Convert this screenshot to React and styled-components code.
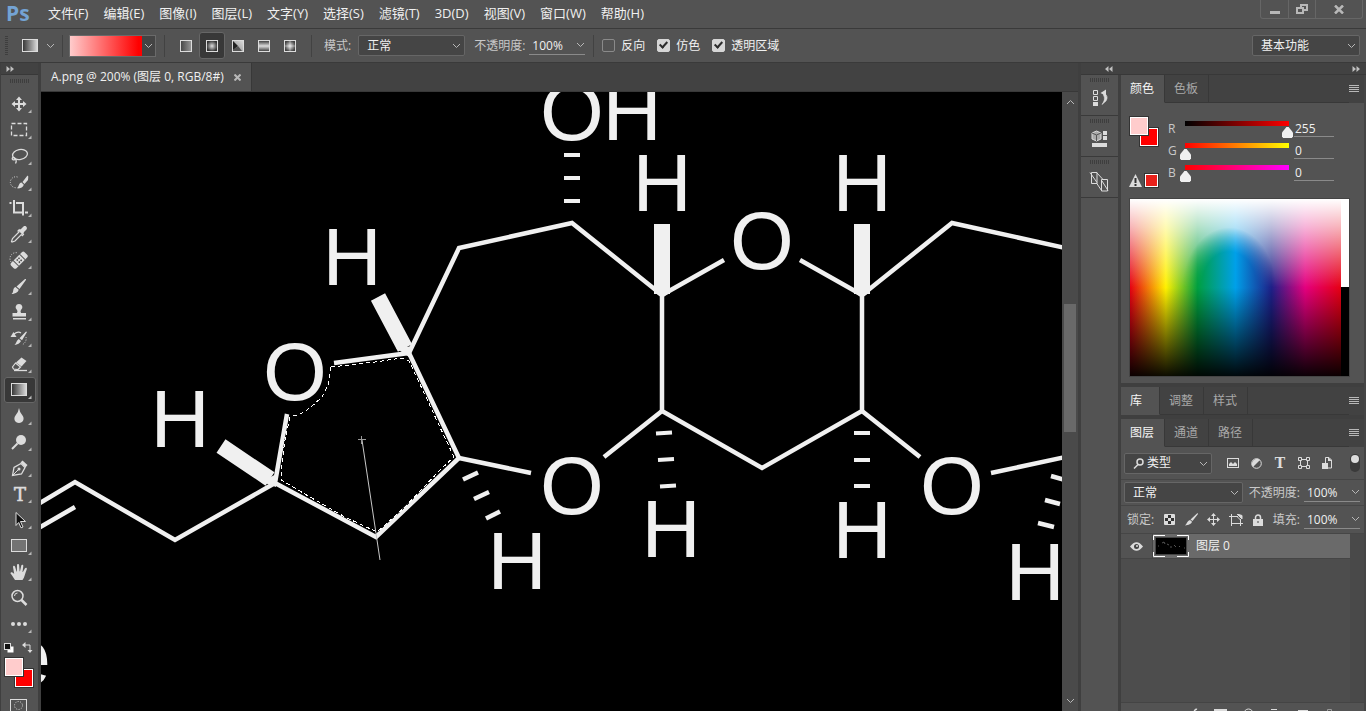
import React from 'react';
import styled, { createGlobalStyle, css } from 'styled-components';

const GlobalStyle = createGlobalStyle`
  *, *::before, *::after { box-sizing: border-box; }
  html, body { margin: 0; background: #535353; overflow: hidden; }
  body, button, input, select {
    font-family: "Open Sans", "Noto Sans CJK SC", sans-serif;
    font-size: 12px;
    line-height: 16px;
    color: #f0f0f0;
  }
  button { margin: 0; padding: 0; border: 0; background: none; }
  svg { display: block; flex: none; }
`;

const Shell = styled.div`
  display: flex;
  flex-direction: column;
  height: 100vh;
  overflow: hidden;
  background: #535353;
`;

/* ---------- menu bar ---------- */

const MenuBar = styled.header`
  display: flex;
  flex: none;
  height: 29px;
  border-bottom: 1px solid #3a3a3a;
`;

const Logo = styled.div`
  width: 48px;
  padding-left: 6px;
  color: #74a3d4;
  font: bold 21px/26px "Open Sans", sans-serif;
`;

const MenuList = styled.nav`
  display: flex;
  flex: 1;
  gap: 15px;
  align-items: center;
  padding-bottom: 2px;
`;

const MenuItem = styled.button`
  font-size: 13px;
  white-space: nowrap;
`;

const WindowButtons = styled.div`
  display: flex;
  height: 19px;
  margin-right: 3px;
  border: 1px solid #666;
  border-top: 0;
  border-radius: 0 0 3px 3px;
`;

const WindowButton = styled.button`
  display: flex;
  align-items: center;
  justify-content: center;
  width: ${(p) => p.$width}px;
  & + & { border-left: 1px solid #666; }
`;

/* ---------- options bar ---------- */

const OptionsBar = styled.div`
  display: flex;
  flex: none;
  align-items: center;
  height: 34px;
  padding: 0 6px 0 5px;
  border-bottom: 1px solid #3a3a3a;
`;

const Grip = styled.div`
  flex: none;
  ${(p) =>
    p.$vertical
      ? css`
          width: 3px;
          height: 20px;
          background: repeating-linear-gradient(180deg, #3e3e3e 0 1px, #535353 1px 2px);
        `
      : css`
          width: 20px;
          height: 4px;
          background: repeating-linear-gradient(90deg, #3e3e3e 0 1px, #535353 1px 2px);
        `}
`;

const Divider = styled.div`
  flex: none;
  width: 1px;
  height: 22px;
  margin: 0 ${(p) => p.$right}px 0 ${(p) => p.$left}px;
  background: #424242;
`;

const PresetButton = styled.button`
  display: flex;
  align-items: center;
  gap: 8px;
  margin-left: 14px;
`;

const GradientPicker = styled.button`
  display: flex;
  width: 87px;
  height: 22px;
  border: 1px solid #6a6a6a;
`;

const GradientPreview = styled.span`
  flex: 1;
  height: 100%;
  background: linear-gradient(90deg, #ffcccc, #ff0000 95%);
`;

const PickerArrow = styled.span`
  display: flex;
  align-items: center;
  justify-content: center;
  width: 13px;
  height: 100%;
  background: #444;
`;

const KindButton = styled.button`
  display: flex;
  align-items: center;
  justify-content: center;
  width: 26px;
  height: 27px;
  border: 1px solid ${(p) => (p.$active ? '#666' : 'transparent')};
  border-radius: 3px;
  background: ${(p) => (p.$active ? '#383838' : 'transparent')};
`;

const Label = styled.label`
  flex: none;
  color: ${(p) => (p.$strong ? '#f0f0f0' : '#c8c8c8')};
  white-space: nowrap;
`;

const SelectBox = styled.div`
  position: relative;
  flex: none;
  width: ${(p) => p.$width}px;
  height: 21px;
  margin: 0 ${(p) => p.$right || 0}px 0 ${(p) => p.$left || 0}px;
  border: 1px solid #666;
  border-radius: 2px;
  background: #454545;
  svg { position: absolute; top: 7px; right: 3px; pointer-events: none; }
  svg.lead { top: 4px; left: 8px; right: auto; }
`;

const Select = styled.select`
  width: 100%;
  height: 19px;
  padding: 0 16px 0 ${(p) => p.$pad || 8}px;
  border: 0;
  outline: 0;
  background: transparent;
  appearance: none;
  line-height: 18px;
`;

const ValueBox = styled.div`
  display: flex;
  flex: none;
  align-items: center;
  width: 56px;
  height: 19px;
  margin-left: 4px;
  border-bottom: 1px solid #8a8a8a;
`;

const ValueInput = styled.input`
  flex: 1;
  min-width: 0;
  height: 18px;
  padding: 0 0 0 3px;
  border: 0;
  outline: 0;
  background: transparent;
`;

const Check = styled.input`
  position: relative;
  flex: none;
  width: 13px;
  height: 13px;
  margin: 0 6px 0 ${(p) => p.$left}px;
  appearance: none;
  border: 1px solid #8a8a8a;
  border-radius: 2px;
  &:checked { background: #d6d6d6; border-color: #d6d6d6; }
  &:checked::after {
    content: '';
    position: absolute;
    left: 3px;
    top: 0;
    width: 5px;
    height: 8px;
    border: solid #2c2c2c;
    border-width: 0 2px 2px 0;
    transform: rotate(42deg);
  }
`;

const Spacer = styled.div`flex: 1;`;

/* ---------- workspace ---------- */

const Workspace = styled.div`
  display: flex;
  flex: 1;
  min-height: 0;
`;

const ToolColumn = styled.aside`
  display: flex;
  flex: none;
  flex-direction: column;
  width: 41px;
  border-right: 3px solid #3f3f3f;
  border-left: 1px solid #3f3f3f;
  overflow: hidden;
`;

const StripHeader = styled.div`
  display: flex;
  flex: none;
  align-items: center;
  height: 12px;
  padding: 0 6px 0 ${(p) => p.$left}px;
  border-bottom: 1px solid #383838;
  background: #424242;
`;

const GripRow = styled.div`
  display: flex;
  flex: none;
  justify-content: center;
  height: 16px;
  padding-top: 4px;
`;

const ToolButton = styled.button`
  flex: none;
  width: 32px;
  height: 26px;
  margin-left: 3px;
  border-radius: 3px;
  ${(p) => p.$active && css`background: #383838; box-shadow: inset 0 0 0 1px #666;`}
`;

const ColorControls = styled.div`
  flex: none;
  padding: 3px 0 0 3px;
`;

const SwatchPair = styled.div`
  display: grid;
  grid-template: 11px 9px 10px / 10px 10px 10px;
  width: 30px;
`;

const Swatch = styled.button`
  width: 20px;
  height: 20px;
  border: 1px solid #333;
  box-shadow: inset 0 0 0 1px #fff;
  background: ${(p) => p.$color};
  grid-area: ${(p) => (p.$front ? '1 / 1 / 3 / 3' : '2 / 2 / 4 / 4')};
  z-index: ${(p) => (p.$front ? 1 : 0)};
`;

const Document = styled.main`
  display: flex;
  flex: 1;
  flex-direction: column;
  min-width: 0;
`;

const DocTabs = styled.div`
  display: flex;
  flex: none;
  height: 29px;
  border-bottom: 1px solid #383838;
  background: #424242;
`;

const DocTab = styled.div`
  display: flex;
  align-items: center;
  gap: 10px;
  padding: 0 10px;
  border-right: 1px solid #383838;
  background: #535353;
  white-space: nowrap;
`;

const DocTabName = styled.button`
  font-size: 12px;
`;

const CanvasRow = styled.div`
  display: flex;
  flex: 1;
  min-height: 0;
`;

const Canvas = styled.div`
  flex: 1;
  min-width: 0;
  background: #000;
  overflow: hidden;
`;

const ScrollBar = styled.div`
  display: flex;
  flex: none;
  flex-direction: column;
  align-items: center;
  width: 16px;
  padding: 7px 0;
  background: #4a4a4a;
`;

const ScrollTrack = styled.div`
  flex: 1;
  width: 12px;
  padding-top: 199px;
`;

const ScrollThumb = styled.div`
  height: 128px;
  background: #696969;
`;

const RightArea = styled.aside`
  display: flex;
  flex: none;
  flex-direction: column;
  width: 288px;
  border-left: 3px solid #3f3f3f;
`;

const RightBody = styled.div`
  display: flex;
  flex: 1;
  min-height: 0;
`;

const Dock = styled.div`
  flex: none;
  width: 40px;
  border-right: 3px solid #3f3f3f;
`;

const DockButton = styled.button`
  display: flex;
  flex-direction: column;
  align-items: center;
  width: 100%;
  height: 41px;
  padding-top: 3px;
  gap: 7px;
  border-bottom: 1px solid #3a3a3a;
`;

const Panels = styled.div`
  display: flex;
  flex: 1;
  flex-direction: column;
  min-width: 0;
  border-right: 2px solid #454545;
`;

const TabRow = styled.div`
  display: flex;
  flex: none;
  align-items: center;
  height: 28px;
  padding-right: 5px;
  background: #424242;
  ${(p) => p.$gap && css`height: 32px; border-top: 4px solid #3f3f3f;`}
`;

const Tab = styled.button`
  align-self: stretch;
  min-width: 39px;
  padding: 0 10px 0 9px;
  border-right: 1px solid #383838;
  border-bottom: 1px solid ${(p) => (p.$active ? '#535353' : '#383838')};
  background: ${(p) => (p.$active ? '#535353' : '#424242')};
  color: ${(p) => (p.$active ? '#f5f5f5' : '#a8a8a8')};
  text-align: left;
`;

const TabFill = styled.div`
  flex: 1;
  align-self: stretch;
  border-bottom: 1px solid #383838;
`;

const ColorPanel = styled.section`
  display: flex;
  flex: none;
  flex-direction: column;
  gap: 11px;
  height: 280px;
  padding: 13px 14px 6px 8px;
`;

const ColorTop = styled.div`
  display: flex;
  height: 71px;
`;

const ColorSide = styled.div`
  display: flex;
  flex-direction: column;
  justify-content: space-between;
  width: 39px;
`;

const GamutRow = styled.div`
  display: flex;
  align-items: center;
  gap: 3px;
`;

const GamutSwatch = styled.button`
  width: 13px;
  height: 13px;
  outline: 1px solid #333;
  box-shadow: inset 0 0 0 1px #fff;
  background: #e8201a;
`;

const Channels = styled.div`
  display: flex;
  flex-direction: column;
`;

const Channel = styled.div`
  display: flex;
  align-items: flex-start;
  height: 22px;
  padding-top: 5px;
  label { width: 12px; color: #c8c8c8; }
`;

const Slider = styled.input`
  width: 113px;
  height: 17px;
  margin: 0;
  appearance: none;
  background: ${(p) => p.$ramp} 5px 0 / 104px 5px no-repeat;
  &::-webkit-slider-runnable-track { height: 17px; }
  &::-webkit-slider-thumb {
    appearance: none;
    width: 11px;
    height: 11px;
    margin-top: 6px;
    background: #f0f0f0;
    clip-path: polygon(40% 0, 60% 0, 100% 50%, 100% 85%, 90% 100%, 10% 100%, 0 85%, 0 50%);
  }
`;

const ChannelValue = styled.input`
  width: 40px;
  height: 16px;
  margin-left: 1px;
  padding: 0 0 0 1px;
  border: 0;
  border-bottom: 1px solid #8a8a8a;
  outline: 0;
  background: transparent;
`;

const Spectrum = styled.div`
  display: flex;
  width: 221px;
  height: 179px;
  border: 1px solid #444;
`;

const hues = 'linear-gradient(90deg, #e60012, #fff100 17%, #009f40 32%, #00a0e9 50%, #1d2088 67%, #e4007f 83%, #e60012 100%)';

const SpectrumField = styled.div`
  flex: 1;
  background:
    linear-gradient(180deg, #fff 0, rgba(255, 255, 255, 0.7) 16%, rgba(255, 255, 255, 0) 50%, rgba(0, 0, 0, 0) 50%, rgba(0, 0, 0, 0.95) 100%),
    ${hues};
  &::before {
    content: '';
    display: block;
    height: 50%;
    background: ${hues};
    mask-image: radial-gradient(ellipse 22% 68% at 47% 100%, #000 0, #000 60%, transparent 100%);
  }
`;

const SpectrumEnds = styled.div`
  width: 8px;
  background: linear-gradient(180deg, #fff 50%, #000 50%);
`;

const LayerControls = styled.div`
  display: flex;
  flex: none;
  align-items: center;
  height: ${(p) => p.$height}px;
  padding: 0 4px 0 3px;
  border-bottom: 1px solid #464646;
`;

const LockLabel = styled.span`
  flex: none;
  padding-left: 3px;
  color: #c8c8c8;
`;

const IconGroup = styled.div`
  display: flex;
  flex: 1;
  align-items: center;
  justify-content: space-between;
  padding: 0 ${(p) => p.$right || 0}px 0 ${(p) => p.$left || 0}px;
`;

const Toggle = styled.button`
  width: 10px;
  height: 18px;
  border-radius: 5px;
  background: #3a3a3a;
  &::before {
    content: '';
    display: block;
    width: 8px;
    height: 8px;
    margin: 1px 1px 9px;
    border-radius: 50%;
    background: #dcdcdc;
  }
`;

const LayerList = styled.div`
  flex: 1;
  min-height: 0;
  border-right: 14px solid #494949;
  background: #4d4d4d;
`;

const LayerRow = styled.div`
  display: flex;
  height: 25px;
  border-bottom: 1px solid #454545;
`;

const EyeButton = styled.button`
  display: flex;
  align-items: center;
  justify-content: center;
  width: 32px;
  border-right: 1px solid #454545;
  background: #535353;
`;

const LayerName = styled.button`
  display: flex;
  flex: 1;
  align-items: center;
  gap: 7px;
  background: #6a6a6a;
`;

const PanelFooter = styled.div`
  display: flex;
  flex: none;
  align-items: flex-start;
  justify-content: space-between;
  height: 9px;
  padding: 5px 30px 0 70px;
  border-top: 1px solid #444;
  overflow: hidden;
`;

/* ---------- drawings ---------- */

const LIGHT = '#dcdcdc';

const Chevron = ({ up }) => (
  <svg width="9" height="6" viewBox="0 0 9 6" fill="none" stroke="#b8b8b8">
    <path d={up ? 'M1 5L4.5 1.5L8 5' : 'M1 1L4.5 4.5L8 1'} />
  </svg>
);

const DoubleArrow = ({ left }) => (
  <svg width="8" height="6" viewBox="0 0 8 6" fill="#c0c0c0">
    <path d={left ? 'M3.5 0v6L0 3zM7.5 0v6L4 3z' : 'M.5 0v6L4 3zM4.5 0v6L8 3z'} />
  </svg>
);

const MenuLines = () => (
  <svg width="10" height="8" viewBox="0 0 10 8" stroke="#b8b8b8">
    <path d="M0 .5h10M0 2.500h10M0 4.500h10M0 6.500h10" />
  </svg>
);

const Gradients = () => (
  <svg width="0" height="0" style={{ position: 'absolute' }}>
    <defs>
      <linearGradient id="lin"><stop stopColor="#333" /><stop offset="1" stopColor="#ddd" /></linearGradient>
      <linearGradient id="linSoft"><stop stopColor="#444" /><stop offset="1" stopColor="#999" /></linearGradient>
      <radialGradient id="rad"><stop stopColor="#ddd" /><stop offset="1" stopColor="#333" /></radialGradient>
      <radialGradient id="dia"><stop stopColor="#eee" /><stop offset="1" stopColor="#444" /></radialGradient>
      <linearGradient id="refl" x2="0" y2="1">
        <stop stopColor="#333" /><stop offset=".5" stopColor="#ddd" /><stop offset="1" stopColor="#333" />
      </linearGradient>
      <linearGradient id="angleFill" x1="0" y1="1" x2="1" y2="0">
        <stop stopColor="#888" /><stop offset="1" stopColor="#ddd" />
      </linearGradient>
    </defs>
  </svg>
);

const KindIcon = ({ kind }) => (
  <svg width="12" height="12" viewBox="0 0 12 12">
    <rect x=".5" y=".5" width="11" height="11" stroke="#dcdcdc" fill={kind === 'angle' ? 'url(#angleFill)' : `url(#${kind})`} />
    {kind === 'angle' && <path d="M1 1L6 6L1 10z" fill="#222" />}
    {kind === 'angle' && <path d="M1 10L6 6L10 11H1z" fill="#555" />}
    {kind === 'dia' && <path d="M6 1v10M1 6h10" stroke="#ddd" opacity=".5" />}
  </svg>
);

const brushHead = 'M21 6c.8-.3 1.300.3.9 1L15.500 16l-3-2.500zM11.500 14l3.200 2.700c-.8 3-4 4-7.200 4.300c1.300-1 1.500-2 1.700-3.500c.3-2 .8-3 2.300-3.500z';

const toolIcons = {
  '移动工具': (
    <path d="M15 5.500l3 3.500h-2v3h3v-2l3.500 3l-3.500 3v-2h-3v3h2l-3 3.500l-3-3.500h2v-3h-3v2l-3.500-3l3.500-3v2h3v-3h-2z" fill={LIGHT} />
  ),
  '矩形选框工具': <rect x="7.500" y="6.500" width="15" height="12" fill="none" stroke={LIGHT} strokeWidth="1.300" strokeDasharray="4 2" />,
  '套索工具': (
    <g fill="none" stroke={LIGHT} strokeWidth="1.300">
      <ellipse cx="16" cy="11.500" rx="7.500" ry="5" transform="rotate(-10 16 11.500)" />
      <path d="M10 14.500c-2-.5-2.500 2-.5 2.300c2 .2 2.500-1.500.5-2.300c2 1 3 3.500 1.500 6" />
    </g>
  ),
  '快速选择工具': (
    <>
      <path d="M13.500 8a5.500 5.500 0 1 0 0 10.500" fill="none" stroke={LIGHT} strokeDasharray="1 1.500" />
      <path d="M23.500 6.500l.8 1l-.3 3.500l-3.500 4l-2-2zM17.500 13.500l2.300 2.200c-.5 2.500-3 3.500-6.500 3.800c1.500-2 1.500-5.500 4.200-6z" fill={LIGHT} />
    </>
  ),
  '裁剪工具': <path d="M5.500 8h2M10 5v12.500h9M12 8h7v12.500M21 17.500h3" fill="none" stroke={LIGHT} strokeWidth="2" />,
  '吸管工具': (
    <>
      <path d="M16 10l3.500 3.500l-1.200 1.200l-1-1L11 20l-3 1l-.5-.5l1-3L15 11l-1-1l1.200-1.200z" fill="none" stroke={LIGHT} strokeWidth="1.200" />
      <path d="M16 8.500l1-.5l2.500-2.500c2-1.500 4.500 1 3 3L20 11l-.5 1.500l-1 1l-4-4z" fill={LIGHT} />
    </>
  ),
  '污点修复画笔工具': (
    <>
      <path d="M7 15a6 6 0 0 1 7-9" fill="none" stroke={LIGHT} strokeDasharray="1 1.500" />
      <g transform="rotate(-45 15 13)">
        <rect x="5.500" y="9.500" width="19" height="7.500" rx="2" fill={LIGHT} />
        <path d="M10.500 9v8M19.500 9v8" stroke="#535353" />
        <path d="M13 11h1.500v1.500H13zM15.500 11H17v1.500h-1.500zM13 14h1.500v1.500H13zM15.500 14H17v1.500h-1.500z" fill="#444" />
      </g>
    </>
  ),
  '画笔工具': <path d={brushHead} fill={LIGHT} />,
  '仿制图章工具': <path d="M15 5a3.300 3.300 0 0 1 2 6q-1 1 0 3h5v3.500H8.500V14H13q1-2 0-3a3.300 3.300 0 0 1 2-6zM9 19h13v1.500H9z" fill={LIGHT} />,
  '历史记录画笔工具': (
    <>
      <path d="M22 6.500l1 .6l-5 8.200l-2.500-2zM14.800 14l2.200 2c-1 2.500-3.500 3.500-6.500 4c1.700-1.500 2-4.500 4.300-6z" fill={LIGHT} />
      <path d="M6.500 12h6L9.500 7z" fill={LIGHT} />
      <path d="M10 9q4-3 7-1" fill="none" stroke={LIGHT} strokeWidth="1.200" />
      <path d="M22 12q1 5-4 8" fill="none" stroke={LIGHT} strokeDasharray="1 1.500" />
    </>
  ),
  '橡皮擦工具': (
    <>
      <path d="M17.500 6.500l5 3.500l-5 5.500l-5.500-4z" fill={LIGHT} />
      <path d="M11.500 12l5 4l-2.500 2.500l-4.500-.5l-1-2z" fill="none" stroke={LIGHT} strokeWidth="1.200" />
      <path d="M10 19.500h13" stroke={LIGHT} strokeWidth="1.300" />
    </>
  ),
  '渐变工具': <rect x="7.500" y="6.500" width="15" height="12" fill="url(#lin)" stroke={LIGHT} />,
  '模糊工具': <path d="M15 5q.5 4 3.500 7.500c2.500 3.200.5 7.500-3.500 7.500s-6-4.300-3.500-7.500Q14.500 9 15 5z" fill={LIGHT} />,
  '减淡工具': (
    <>
      <circle cx="17" cy="11" r="5" fill={LIGHT} />
      <path d="M13.500 14.500L8 20" stroke={LIGHT} strokeWidth="2" />
    </>
  ),
  '钢笔工具': (
    <>
      <path d="M8.500 20.500l1.500-8l7-4l4 4l-3.500 6.500z" fill="none" stroke={LIGHT} strokeWidth="1.300" />
      <path d="M8.500 20.500l6-6" stroke={LIGHT} />
      <circle cx="15" cy="14" r="1.500" fill={LIGHT} />
      <path d="M16.500 7.500l2-2l5 4.500l-2 2.500z" fill={LIGHT} />
    </>
  ),
  '横排文字工具': (
    <text x="16" y="20" textAnchor="middle" fill={LIGHT} fontFamily="DejaVu Serif" fontSize="18" stroke={LIGHT} strokeWidth=".6">T</text>
  ),
  '路径选择工具': <path d="M12 5.500l9.500 9h-5l2.500 5.500l-2 .8l-2.300-5.300l-2.700 3z" fill="#111" stroke={LIGHT} />,
  '矩形工具': <rect x="7.500" y="6.500" width="15" height="12" fill="#737373" stroke={LIGHT} />,
  '抓手工具': (
    <path d="M11 21c-2-3-3-5-4.500-6.500c0-1.500 1.500-1.700 2.700-.5l1 1L9 8c0-1.500 1.700-1.700 2.100-.3l1.400 4.800h.4L13 6c.1-1.500 2-1.500 2.100 0l.5 6.300h.4L17.300 6.500c.4-1.400 2.200-1 2 .5L18.500 13h.4l2.100-3.700c.8-1.100 2.300-.4 1.800 1c-1.800 4-2 8-4.300 10.700z" fill={LIGHT} />
  ),
  '缩放工具': (
    <>
      <circle cx="13.500" cy="11" r="5.500" fill="none" stroke={LIGHT} strokeWidth="1.500" />
      <path d="M10.500 11a3 3 0 0 1 3-3" fill="none" stroke={LIGHT} />
      <path d="M17.500 15l5 5" stroke={LIGHT} strokeWidth="2.500" />
    </>
  ),
  '编辑工具栏': (
    <g fill={LIGHT}><circle cx="9" cy="13" r="2" /><circle cx="15" cy="13" r="2" /><circle cx="21" cy="13" r="2" /></g>
  ),
};

const Tool = ({ name, active }) => (
  <ToolButton aria-label={name} $active={active}>
    <svg width="32" height="26" viewBox="0 0 32 26">
      {toolIcons[name]}
      {name !== '缩放工具' && <path d="M27.500 18.500v3.500H24z" fill="#b8b8b8" />}
    </svg>
  </ToolButton>
);

const atoms = [
  ['O', 572, 140], ['H', 632, 140], ['H', 662, 211], ['H', 862, 211], ['O', 762, 269],
  ['H', 352, 285], ['O', 295, 400], ['H', 180, 447], ['O', 572, 514], ['O', 952, 514],
  ['H', 517, 589], ['H', 671, 557], ['H', 862, 558], ['H', 1035, 600], ['e', 28, 685],
];

const selectionPath = 'M331 367L375 362L402 358L409 361L425 395L445 438L454 457L440 470L405 507L377 532L345 517L310 497L281 480L281 470L285 440L290 417L300 414L310 408L322 397L328 385Z';

const Molecule = () => (
  <svg width="100%" height="100%" role="img" aria-label="A.png">
    <g transform="translate(-41 -92)">
      <g fill="none" stroke="#f0f0f0" strokeWidth="4.500">
        <path d="M334 363L409 353L459 458L376 537L275 483L287 414" />
        <path d="M409 353L459 248L572 223L662 295V411L762 468L862 411V295L952 223L1070 249" />
        <path d="M662 295L724 260M800 260L862 295M662 411L604 457M459 458L531 473M862 411L920 457M991 473L1070 456" />
        <path d="M275 483L175 540L75 482L35 506M75 507L35 530" />
        <path d="M564 155h16M564 178h16M564 201h16M656 433.500l16-1M658 460l16-1M660 486.500l16-1M854 433h16M854 460h16M854 486h16" strokeWidth="4" />
        <path d="M463 479.500l15-7M474 499l15-7M486 518.500l14-7M1051 476l14 4M1045 500l15 4M1038 523l16 4" />
      </g>
      <path d="M378 297L405 348M221 446L270 479M662 224V294M862 224V294" stroke="#f0f0f0" strokeWidth="16" />
      <path d="M654 292L662 298L670 292M854 292L862 298L870 292M396 348L409 357L414 346M262 482L276 487L276 474" fill="#f0f0f0" />
      <g fill="#f0f0f0" fontFamily="Liberation Sans, Arial, sans-serif" fontSize="82" textAnchor="middle">
        {atoms.map(([letter, x, y]) => <text key={`${x}-${y}`} x={x} y={y}>{letter}</text>)}
      </g>
      <g fill="none" strokeWidth="1">
        <path stroke="#000" d={selectionPath} />
        <path stroke="#fff" strokeDasharray="4 3" shapeRendering="crispEdges" d={selectionPath} />
        <path d="M362 440L380 560" stroke="#c8c8c8" />
        <path d="M358 439.500h8M361.500 436v8" stroke="#999" />
      </g>
    </g>
  </svg>
);

const BrushSmall = () => (
  <svg width="13" height="13" viewBox="0 0 13 13" fill={LIGHT}>
    <path d="M12.500 0L13 1L7.500 8L5.500 6.500zM5 7l2 1.700C6.500 11 3.500 12 0 12.500C2 11 2 8 5 7z" />
  </svg>
);

const MoveSmall = () => (
  <svg width="13" height="13" viewBox="0 0 13 13" fill={LIGHT}>
    <path d="M6.500 0L9 3H7v3h3V4l3 2.500L10 9V7H7v3h2L6.500 13L4 10h2V7H3v2L0 6.500L3 4v2h3V3H4z" />
  </svg>
);

const Opacity = ({ id, children }) => (
  <>
    <Label htmlFor={id}>{children}</Label>
    <ValueBox>
      <ValueInput id={id} defaultValue="100%" />
      <Chevron />
    </ValueBox>
  </>
);

const menus = ['文件(F)', '编辑(E)', '图像(I)', '图层(L)', '文字(Y)', '选择(S)', '滤镜(T)', '3D(D)', '视图(V)', '窗口(W)', '帮助(H)'];

const kinds = [['linSoft', '线性渐变'], ['rad', '径向渐变'], ['angle', '角度渐变'], ['refl', '对称渐变'], ['dia', '菱形渐变']];

const channels = [
  ['R', 255, 'linear-gradient(90deg, #000, #f00)'],
  ['G', 0, 'linear-gradient(90deg, #f00, #ff0)'],
  ['B', 0, 'linear-gradient(90deg, #f00, #f0f)'],
];

const PanelTabs = ({ names, gap }) => (
  <TabRow $gap={gap} role="tablist">
    {names.map((name, i) => (
      <Tab key={name} role="tab" aria-selected={i === 0} $active={i === 0}>{name}</Tab>
    ))}
    <TabFill />
    <button aria-label="面板菜单"><MenuLines /></button>
  </TabRow>
);

const TopBar = () => (
  <MenuBar>
    <Logo>Ps</Logo>
    <MenuList>{menus.map((m) => <MenuItem key={m}>{m}</MenuItem>)}</MenuList>
    <WindowButtons>
      <WindowButton aria-label="最小化" $width={27}>
        <svg width="10" height="10"><path d="M0 7h10v3H0z" fill="#b8b8b8" /></svg>
      </WindowButton>
      <WindowButton aria-label="还原" $width={27}>
        <svg width="12" height="10" fill="none" stroke="#b8b8b8" strokeWidth="2"><path d="M1 4h6v5H1zM5 4V1h6v5H7" /></svg>
      </WindowButton>
      <WindowButton aria-label="关闭" $width={47}>
        <svg width="10" height="9" stroke="#b8b8b8" strokeWidth="2.500"><path d="M1 .5l8 8M9 .5l-8 8" /></svg>
      </WindowButton>
    </WindowButtons>
  </MenuBar>
);

const Options = () => (
  <OptionsBar>
    <Grip $vertical />
    <PresetButton aria-label="工具预设">
      <svg width="16" height="13"><rect x=".5" y=".5" width="15" height="12" fill="url(#lin)" stroke={LIGHT} /></svg>
      <Chevron />
    </PresetButton>
    <Divider $left={7} $right={6} />
    <GradientPicker aria-label="编辑渐变">
      <GradientPreview />
      <PickerArrow><Chevron /></PickerArrow>
    </GradientPicker>
    <Divider $left={8} $right={8} />
    {kinds.map(([kind, name], i) => (
      <KindButton key={kind} aria-label={name} $active={i === 1}><KindIcon kind={kind} /></KindButton>
    ))}
    <Divider $left={8} $right={12} />
    <Label htmlFor="mode">模式:</Label>
    <SelectBox $width={107} $left={7} $right={9}>
      <Select id="mode"><option>正常</option></Select>
      <Chevron />
    </SelectBox>
    <Opacity id="opacity">不透明度:</Opacity>
    <Divider $left={8} $right={0} />
    <Check type="checkbox" id="reverse" $left={8} />
    <Label $strong htmlFor="reverse">反向</Label>
    <Check type="checkbox" id="dither" defaultChecked $left={12} />
    <Label $strong htmlFor="dither">仿色</Label>
    <Check type="checkbox" id="transparency" defaultChecked $left={12} />
    <Label $strong htmlFor="transparency">透明区域</Label>
    <Spacer />
    <SelectBox $width={108}>
      <Select aria-label="工作区"><option>基本功能</option></Select>
      <Chevron />
    </SelectBox>
  </OptionsBar>
);

const Tools = () => (
  <ToolColumn>
    <StripHeader $left={5}><DoubleArrow /></StripHeader>
    <GripRow><Grip /></GripRow>
    {Object.keys(toolIcons).map((name) => <Tool key={name} name={name} active={name === '渐变工具'} />)}
    <ColorControls>
      <svg width="32" height="17" viewBox="0 0 32 17">
        <rect x="3.500" y="6.500" width="6" height="6" fill="#fff" />
        <rect x=".5" y="3.500" width="6" height="6" fill="#111" stroke={LIGHT} />
        <path d="M19 5h7v6" fill="none" stroke={LIGHT} />
        <path d="M18 5l3.500-3v6zM26 13l-2.500-3h5z" fill={LIGHT} />
      </svg>
      <SwatchPair>
        <Swatch $front $color="#ffcccc" aria-label="前景色" />
        <Swatch $color="#ff0000" aria-label="背景色" />
      </SwatchPair>
    </ColorControls>
    <ToolButton aria-label="快速蒙版">
      <svg width="32" height="26" viewBox="0 0 32 26" fill="none" stroke={LIGHT}>
        <rect x="6.500" y="12.500" width="16" height="12" />
        <circle cx="14.500" cy="18.500" r="4" strokeDasharray="1 1.500" />
      </svg>
    </ToolButton>
  </ToolColumn>
);

const dockIcons = [
  ['历史记录', (
    <svg key="h" width="16" height="18" viewBox="0 0 16 18">
      <path d="M1.500 1.500h4v4h-4zM1.500 7.500h4v4h-4z" fill="none" stroke={LIGHT} />
      <path d="M1 13h5v4H1zM8.500 4L14 .5V7z" fill={LIGHT} />
      <path d="M12 4q5 3 2 8l-4 3.500q4-5 1.500-9.500z" fill={LIGHT} stroke={LIGHT} strokeWidth=".6" />
    </svg>
  )],
  ['库', (
    <svg key="l" width="17" height="18" viewBox="0 0 17 18">
      <path d="M5.500 1L10 3v6l-4.500 2L1 9V3z" fill="#aaa" stroke={LIGHT} />
      <path d="M1 3l4.500 2L10 3M5.500 5v6" fill="none" stroke="#555" />
      <path d="M12 1h4v4h-4zM12 6h4v4h-4zM1 13h15v4H1z" fill={LIGHT} />
    </svg>
  )],
  ['图层复合', (
    <svg key="c" width="21" height="21" viewBox="0 0 21 21" fill="none" stroke={LIGHT}>
      <path d="M2.500 1.500H8v11H2.500zM12.500 8.500h6V20h-6z" />
      <path d="M1 1.500l7 10M8 2l6 6.500M7.500 12l5 7.500M13 10l6 9.500" />
    </svg>
  )],
];

const Color = () => (
  <ColorPanel>
    <ColorTop>
      <ColorSide>
        <SwatchPair>
          <Swatch $front $color="#ffcccc" aria-label="前景色" />
          <Swatch $color="#ff0000" aria-label="背景色" />
        </SwatchPair>
        <GamutRow>
          <svg width="13" height="13" viewBox="0 0 13 13">
            <path d="M6.500 0L13 13H0z" fill={LIGHT} />
            <path d="M6.500 4v5M6.500 10v2" stroke="#333" strokeWidth="2" />
          </svg>
          <GamutSwatch aria-label="色域警告颜色" />
        </GamutRow>
      </ColorSide>
      <Channels>
        {channels.map(([name, value, ramp]) => (
          <Channel key={name}>
            <label htmlFor={`ch-${name}`}>{name}</label>
            <Slider id={`ch-${name}`} type="range" min="0" max="255" defaultValue={value} $ramp={ramp} />
            <ChannelValue aria-label={`${name} 值`} defaultValue={value} />
          </Channel>
        ))}
      </Channels>
    </ColorTop>
    <Spectrum><SpectrumField /><SpectrumEnds /></Spectrum>
  </ColorPanel>
);

const Layers = () => (
  <>
    <LayerControls $height={33}>
      <SelectBox $width={88}>
        <svg className="lead" width="11" height="11" fill="none" stroke={LIGHT} strokeWidth="1.500">
          <circle cx="7" cy="4" r="3" /><path d="M5 6.500L1 10.500" />
        </svg>
        <Select aria-label="筛选" $pad={22}><option>类型</option></Select>
        <Chevron />
      </SelectBox>
      <IconGroup $left={15} $right={17}>
        <svg width="12" height="11"><rect x=".5" y=".5" width="11" height="9" fill="none" stroke={LIGHT} /><path d="M2 8V6l2-2l2 2l2-2l2 2v2z" fill={LIGHT} /></svg>
        <svg width="11" height="11"><circle cx="5.500" cy="5.500" r="4.800" fill="none" stroke={LIGHT} /><path d="M2 9A5 5 0 0 1 9 2z" fill={LIGHT} /></svg>
        <svg width="12" height="12"><text x="6" y="11" textAnchor="middle" fontFamily="DejaVu Serif" fontWeight="bold" fontSize="14" fill={LIGHT}>T</text></svg>
        <svg width="12" height="12" fill="none" stroke={LIGHT}><path d="M2.500 2.500h7v7h-7z" /><path d="M.5.5h3v3h-3zM8.500.5h3v3h-3zM.5 8.500h3v3h-3zM8.500 8.500h3v3h-3z" fill="#535353" /></svg>
        <svg width="11" height="12"><path d="M3.500 6V.5H7L9.500 3v8H6" fill="none" stroke={LIGHT} /><path d="M0 6h6v6H0zM6 0l4 4H6z" fill={LIGHT} /></svg>
      </IconGroup>
      <Toggle aria-label="打开图层过滤" />
    </LayerControls>
    <LayerControls $height={26}>
      <SelectBox $width={119}>
        <Select aria-label="混合模式"><option>正常</option></Select>
        <Chevron />
      </SelectBox>
      <Spacer />
      <Opacity id="layer-opacity">不透明度:</Opacity>
    </LayerControls>
    <LayerControls $height={28}>
      <LockLabel>锁定:</LockLabel>
      <IconGroup $left={10} $right={10}>
        <svg width="11" height="11"><path d="M.5.5h10v10H.5z" fill="#333" stroke={LIGHT} /><path d="M1 1h3v3H1zM7 1h3v3H7zM4 4h3v3H4zM1 7h3v3H1zM7 7h3v3H7z" fill={LIGHT} /></svg>
        <BrushSmall />
        <MoveSmall />
        <svg width="14" height="12" fill="none" stroke={LIGHT}><path d="M0 2.500h9M2.500 0v12M2.500 9.500H14M11.500 12V5M8 2.500l3.500 3.500" /><path d="M8 0l5 5V1.500z" fill={LIGHT} /></svg>
        <svg width="10" height="12"><path d="M2.500 5V3.500a2.500 2.500 0 0 1 5 0V5" fill="none" stroke={LIGHT} strokeWidth="1.500" /><path d="M0 5h10v7H0z" fill={LIGHT} /><path d="M4.500 7h1v2h-1z" fill="#444" /></svg>
      </IconGroup>
      <Opacity id="fill">填充:</Opacity>
    </LayerControls>
    <LayerList>
      <LayerRow>
        <EyeButton aria-label="图层可见性">
          <svg width="13" height="9"><path d="M0 4.500Q6.500-4 13 4.500Q6.500 13 0 4.500z" fill={LIGHT} /><circle cx="6.500" cy="4.500" r="2.500" fill="#444" /><circle cx="7" cy="4" r="1" fill={LIGHT} /></svg>
        </EyeButton>
        <LayerName>
          <svg width="36" height="22" viewBox="0 0 36 22" fill="none">
            <rect x="2.500" y="2.500" width="31" height="17" fill="#000" stroke="#444" />
            <path d="M.5 5V.5H12M24 .5h11.500V5M.5 17v4.500H12M24 21.500h11.500V17" stroke="#fff" />
            <path d="M5 11h1M9 8l2-1l1 2M14 9l2 1M18 11v2M21 10l2 2M26 11l1 1M31 13h1" stroke="#555" />
          </svg>
          图层 0
        </LayerName>
      </LayerRow>
    </LayerList>
    <PanelFooter>
      <svg width="8" height="10"><path d="M2 10Q3 0 6 1.500" fill="none" stroke={LIGHT} strokeWidth="1.500" /></svg>
      <svg width="13" height="10"><path d="M0 1h13v9H0z" fill={LIGHT} /></svg>
      <svg width="11" height="11"><circle cx="5.500" cy="5.500" r="4.500" fill="none" stroke={LIGHT} /></svg>
      <svg width="12" height="10"><path d="M2 1h6v1H2z" fill={LIGHT} /></svg>
      <svg width="12" height="10"><path d="M1 2h10v8H1z" fill={LIGHT} /></svg>
      <svg width="10" height="10"><path d="M3.500 4V1.500h4V4" fill="none" stroke="#999" /></svg>
    </PanelFooter>
  </>
);

export default function App() {
  return (
    <Shell>
      <GlobalStyle />
      <Gradients />
      <TopBar />
      <Options />
      <Workspace>
        <Tools />
        <Document>
          <DocTabs>
            <DocTab>
              <DocTabName>A.png @ 200% (图层 0, RGB/8#)</DocTabName>
              <button aria-label="关闭文档">
                <svg width="7" height="7" stroke="#b8b8b8" strokeWidth="2"><path d="M.5.5l6 6M6.500.5l-6 6" /></svg>
              </button>
            </DocTab>
          </DocTabs>
          <CanvasRow>
            <Canvas><Molecule /></Canvas>
            <ScrollBar>
              <Chevron up />
              <ScrollTrack><ScrollThumb /></ScrollTrack>
              <Chevron />
            </ScrollBar>
          </CanvasRow>
        </Document>
        <RightArea>
          <StripHeader $left={24}>
            <DoubleArrow left />
            <Spacer />
            <DoubleArrow />
          </StripHeader>
          <RightBody>
            <Dock>
              {dockIcons.map(([name, icon]) => (
                <DockButton key={name} aria-label={name}><Grip />{icon}</DockButton>
              ))}
            </Dock>
            <Panels>
              <PanelTabs names={['颜色', '色板']} />
              <Color />
              <PanelTabs gap names={['库', '调整', '样式']} />
              <PanelTabs gap names={['图层', '通道', '路径']} />
              <Layers />
            </Panels>
          </RightBody>
        </RightArea>
      </Workspace>
    </Shell>
  );
}
